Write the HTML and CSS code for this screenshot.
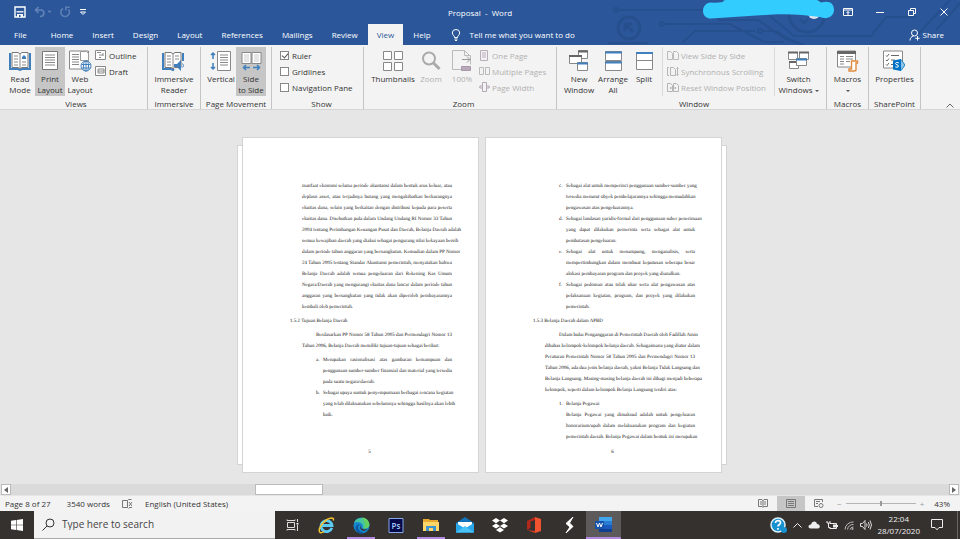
FILE: index.html
```html
<!DOCTYPE html>
<html lang="en">
<head>
<meta charset="utf-8">
<title>Proposal - Word</title>
<link rel="stylesheet" href="styles.css">
</head>
<body>
<header class="header">
  <svg class="circuit" width="360" height="45" viewBox="0 0 360 45" fill="none" stroke="#264f8d" stroke-width="2" aria-hidden="true">
    <circle cx="16" cy="10" r="2"/><path d="M18 10h92l10 10h38l26 18 20 7"/>
    <circle cx="29" cy="28" r="11" stroke-width="3"/><path d="M33 32l-8-8M25 31v-7h7" stroke-width="3"/><path d="M8 43h40"/>
    <circle cx="62" cy="24" r="2"/><path d="M64 24h66l34 18h20"/><path d="M82 43l13-12h60"/><circle cx="160" cy="31" r="2"/><path d="M162 31h14l20 12"/>
    <circle cx="207" cy="14" r="18" stroke-width="3"/><path d="M170 16l24 20h77l15-19h30M318 34l32-34M336 30l24-27"/>
    <path d="M200 19l4 4 4-4"/>
  </svg>
  <div class="titlebar">
    <div class="quick">
      <button class="qbtn" aria-label="Save"><svg width="12" height="12" viewBox="0 0 12 12"><path d="M1 1h10v10H1z" fill="none" stroke="#fff" stroke-width="1.4"/><path d="M2.500 5.800h7" stroke="#fff" stroke-width="1.300"/><path d="M3 8h6v3H3z" fill="#fff"/><path d="M5 9h1.500v2H5z" fill="#2b579a"/></svg></button>
      <button class="qbtn dim" aria-label="Undo"><svg width="18" height="12" viewBox="0 0 18 12" fill="none" stroke="#6484b8" stroke-width="1.600"><path d="M4.500 1L1.500 4l3 3M2 4h5c4 0 4 6-1 6.500M14 5.500h3"/></svg></button>
      <button class="qbtn" aria-label="Redo"><svg width="11" height="12" viewBox="0 0 11 12" fill="none" stroke="#5c7eb4" stroke-width="1.600"><path d="M3 2.500a4.300 4.300 0 1 0 5.500 1M5.800 4.500V1.200h4"/></svg></button>
      <button class="qbtn" aria-label="Customize Quick Access Toolbar"><svg width="8" height="8" viewBox="0 0 8 8" fill="none" stroke="#fff"><path d="M1 1.500h6M1.500 4L4 6.500 6.500 4z"/></svg></button>
    </div>
    <div class="title">Proposal&nbsp; -&nbsp; Word</div>
    <div class="wincontrols">
      <button aria-label="Ribbon Display Options"><svg width="10" height="8" viewBox="0 0 10 8" fill="none" stroke="#fff"><path d="M.5.5h9v7h-9zM.5 2h9M5 7V3.500M3.500 5L5 3.500 6.500 5"/></svg></button>
      <button aria-label="Minimize"><svg width="8" height="8" viewBox="0 0 8 8"><path d="M0 4.500h8" stroke="#fff"/></svg></button>
      <button aria-label="Restore"><svg width="8" height="8" viewBox="0 0 8 8" fill="none" stroke="#fff"><path d="M.5 2.500h5v5h-5zM2.500 2V.5h5v5H6"/></svg></button>
      <button aria-label="Close"><svg width="8" height="8" viewBox="0 0 8 8"><path d="M.5.5l7 7M7.500.5l-7 7" stroke="#fff"/></svg></button>
    </div>
  </div>
  <svg class="marker" width="133" height="20" viewBox="0 0 133 20" aria-hidden="true"><circle cx="113" cy="13" r="6" fill="#dfe6f0"/><path d="M9 2.500Q16 3 22 2 22 0 25 0H116Q119 1 120 2.500C129 0 133 4 133 10c0 7-8 10-14 7C104 15 88 13.500 72 14.500L10 18.500C-1 18 0 4 9 2.500z" fill="#33ccff"/></svg>
  <nav class="tabs">
    <a class="tab file" href="#">File</a><a class="tab" href="#">Home</a><a class="tab" href="#">Insert</a><a class="tab" href="#">Design</a><a class="tab" href="#">Layout</a><a class="tab" href="#">References</a><a class="tab" href="#">Mailings</a><a class="tab" href="#">Review</a><a class="tab active" href="#">View</a><a class="tab" href="#">Help</a>
    <button class="tellme"><svg width="10" height="12" viewBox="0 0 10 12" fill="none" stroke="#fff"><path d="M3.500 8.500C3.500 6.500 1.300 6 1.300 4a3.700 3.500 0 0 1 7.400 0c0 2-2.200 2.500-2.200 4.500zM3.500 10h3M4 11.500h2"/></svg>Tell me what you want to do</button>
    <button class="share"><svg width="11" height="12" viewBox="0 0 11 12" fill="none" stroke="#fff"><circle cx="5.500" cy="4" r="3"/><path d="M1 11.500C1 9 2.500 7.500 4.500 7M8.500 7v4.500M6.300 9.300h4.400"/></svg>Share</button>
  </nav>
</header>

<section class="ribbon" aria-label="View ribbon">
  <div class="group views">
    <div class="body">
      <button class="big w30"><svg width="22" height="20" viewBox="0 0 22 20" fill="none"><path d="M1 2v16h8l2 1 2-1h8V2" stroke="#3f7fbd" stroke-width="2"/><path d="M3 1.500h6l2 1.500 2-1.500h6v15h-6.500L11 18l-1.500-1.500H3z" fill="#fff" stroke="#777"/><path d="M11 3v14M5 5h4M5 8h4M5 11h4M5 14h4M13 11h4M13 14h4" stroke="#888"/><path d="M13 8V6l2-2 2 2v2z" fill="#3f7fbd"/></svg><span>Read<br>Mode</span></button>
      <button class="big w30 on"><svg width="16" height="20" viewBox="0 0 16 20" fill="none"><path d="M.5.500h15v18H.5z" fill="#fff" stroke="#777"/><path d="M3 4h10M3 6.500h10M3 9h10M3 11.500h10M3 14h10" stroke="#888"/></svg><span>Print<br>Layout</span></button>
      <button class="big w30"><svg width="23" height="21" viewBox="0 0 23 21" fill="none"><path d="M.5.500h19v18H.5z" fill="#fff" stroke="#888"/><path d="M3 4h7M3 6.500h7M3 9h7M3 11.500h7M3 14h7" stroke="#888"/><path d="M11.500 1v9h8V3l-2-2z" fill="#fff" stroke="#999"/><circle cx="17" cy="15.500" r="5" fill="#fff" stroke="#3f7fbd"/><path d="M17 10.500v10M12.500 14h9M12.500 17.500h9" stroke="#3f7fbd"/><ellipse cx="17" cy="15.500" rx="2.500" ry="5" stroke="#3f7fbd"/></svg><span>Web<br>Layout</span></button>
      <div class="stack">
        <button class="small"><svg width="11" height="10" viewBox="0 0 11 10" fill="none" stroke="#888"><path d="M.5.500h10v9H.5z" fill="#fff"/><path d="M2 2.500h4M4 5h4M4 7.500h2M8 3v3"/></svg>Outline</button>
        <button class="small"><svg width="11" height="10" viewBox="0 0 11 10" fill="none" stroke="#888"><path d="M.5.500h10v9H.5z" fill="#fff"/><path d="M3 3h6v4H3zM3 5h6"/></svg>Draft</button>
      </div>
    </div>
    <div class="label">Views</div>
  </div>
  <div class="group immersive">
    <div class="body center">
      <button class="big"><svg width="23" height="20" viewBox="0 0 23 20" fill="none"><path d="M1 2v16h8l2 1 1-1M21 2v8" stroke="#3f7fbd" stroke-width="2"/><path d="M3 1.500h6l2 1.500 2-1.500h6v15h-6.500L11 18l-1.500-1.500H3z" fill="#fff" stroke="#777"/><path d="M11 3v14M5 5h4M5 8h4M5 11h4M5 14h4M13 5h4M13 8h4" stroke="#888"/><path d="M12 13h3l4-4v11l-4-4h-3z" fill="#3f7fbd"/><path d="M20.500 12.500q2 2 0 4" stroke="#3f7fbd"/></svg><span>Immersive<br>Reader</span></button>
    </div>
    <div class="label">Immersive</div>
  </div>
  <div class="group movement">
    <div class="body center">
      <button class="big w30"><svg width="22" height="20" viewBox="0 0 22 20" fill="none"><path d="M7.500.500h13v19h-13z" fill="#fff" stroke="#888"/><path d="M10 4h8M10 6.500h8M10 9h8M10 11.500h8M10 14h8" stroke="#888"/><path d="M3 2v6M1 4l2-2 2 2M3 12v6M1 16l2 2 2-2" stroke="#3f7fbd" stroke-width="1.500"/></svg><span>Vertical</span></button>
      <button class="big w30 on"><svg width="21" height="20" viewBox="0 0 21 20" fill="none"><path d="M1 1.500h9v11H1zM11 1.500h9v11h-9z" fill="#fff" stroke="#888"/><path d="M3 4h5M3 6h5M3 8h5M3 10h5M13 4h5M13 6h5M13 8h5M13 10h5" stroke="#ccc"/><path d="M9 16.500H3M5 14l-2.500 2.500L5 19M12 16.500h6M16 14l2.500 2.500L16 19" stroke="#3f7fbd" stroke-width="1.500"/></svg><span>Side<br>to Side</span></button>
    </div>
    <div class="label">Page Movement</div>
  </div>
  <div class="group show">
    <div class="body">
      <div class="stack">
        <label class="small"><input type="checkbox" checked>Ruler</label>
        <label class="small"><input type="checkbox">Gridlines</label>
        <label class="small"><input type="checkbox">Navigation Pane</label>
      </div>
    </div>
    <div class="label">Show</div>
  </div>
  <div class="group zoom">
    <div class="body">
      <button class="big w44"><svg width="20" height="20" viewBox="0 0 20 20" fill="#fff" stroke="#888"><path d="M.5.500h8v8h-8zM11.500.500h8v8h-8zM.5 11.500h8v8h-8zM11.500 11.500h8v8h-8z"/></svg><span>Thumbnails</span></button>
      <button class="big w30 off" disabled><svg width="20" height="20" viewBox="0 0 20 20" fill="none" stroke="#aaa"><circle cx="8" cy="7.500" r="6" stroke-width="2"/><path d="M12.500 12l6 6" stroke-width="3"/></svg><span>Zoom</span></button>
      <button class="big w30 off" disabled><svg width="20" height="22" viewBox="0 0 20 22" fill="none" stroke="#bbb"><path d="M.5.500h12l6 6M.5.500v19h9M12.500.500v5h6v9" /><path d="M10 9.500h8M15 6.500l3 3-3 3" stroke="#999"/><path d="M9.500 16.500h9v4h-9z" fill="#b8a8b8" stroke="#a99aa9"/></svg><span>100%</span></button>
      <div class="stack off">
        <button class="small" disabled><svg width="11" height="11" viewBox="0 0 11 11" fill="none" stroke="#bbaebb"><path d="M1.500.500h7v10h-7zM3 3h4M3 5h4M3 7h4"/></svg>One Page</button>
        <button class="small" disabled><svg width="11" height="10" viewBox="0 0 11 10" fill="none" stroke="#bbb"><path d="M.5 1.500h4v7h-4zM6.500 1.500h4v7h-4z"/></svg>Multiple Pages</button>
        <button class="small" disabled><svg width="11" height="10" viewBox="0 0 11 10" fill="none" stroke="#b4a8b4"><path d="M3.500.500h4v9h-4z"/><path d="M2.500 3l-2 2 2 2M8.500 3l2 2-2 2M0 5h3M8 5h3"/></svg>Page Width</button>
      </div>
    </div>
    <div class="label">Zoom</div>
  </div>
  <div class="group window">
    <div class="body">
      <button class="big w34"><svg width="20" height="22" viewBox="0 0 20 22" fill="#fff" stroke="#888"><path d="M9.500.500h9v8h-9z"/><path d="M9 1.500h10" stroke="#666" stroke-width="2"/><path d="M.5 5.500h12v8H.5z"/><path d="M0 6h13" stroke="#666" stroke-width="2"/><path d="M8.500 12.500h10v8h-10z"/><path d="M8 13.500h11" stroke="#3f7fbd" stroke-width="2"/></svg><span>New<br>Window</span></button>
      <button class="big w34"><svg width="17" height="20" viewBox="0 0 17 20" fill="#fff" stroke="#888"><path d="M.5.500h16v9H.5zM.5 10.500h16v9H.5z"/><path d="M0 1.500h17M0 11.500h17" stroke="#3f7fbd" stroke-width="2"/></svg><span>Arrange<br>All</span></button>
      <button class="big w28"><svg width="17" height="20" viewBox="0 0 17 20" fill="#fff" stroke="#888"><path d="M.5 1.500h16v17H.5zM0 9.500h17"/><path d="M0 2h17" stroke="#3f7fbd" stroke-width="2"/></svg><span>Split</span></button>
      <div class="stack off divided">
        <button class="small" disabled><svg width="12" height="9" viewBox="0 0 12 9" fill="none" stroke="#bbb"><path d="M.5.500h3l2 2v6h-5zM6.500.500h3l2 2v6h-5z"/></svg>View Side by Side</button>
        <button class="small" disabled><svg width="12" height="9" viewBox="0 0 12 9" fill="none" stroke="#b5b5b5"><path d="M2 .5H.5v8H2M3.500.500h3l2 2v6h-5zM10.500 0v9M9.500 1.500l1-1 1 1M9.500 7.500l1 1 1-1"/></svg>Synchronous Scrolling</button>
        <button class="small" disabled><svg width="12" height="9" viewBox="0 0 12 9" fill="none" stroke="#b5b5b5"><path d="M.5.500h3l2 2v6h-5zM6.500.500h3l2 2v6h-5zM3 5h6M4 4L3 5l1 1M8 4l1 1-1 1"/></svg>Reset Window Position</button>
      </div>
      <button class="big switch"><svg width="21" height="20" viewBox="0 0 21 20" fill="#fff" stroke="#888"><path d="M.5 1.500h9v7h-9zM11.500 1.500h9v7h-9zM1.500 10.500h9v7h-9z"/><path d="M0 1.500h10M11 1.500h10M1 11h7" stroke="#666" stroke-width="2"/><path d="M8.500 7.500h10v7h-10z"/><path d="M8 8.500h11" stroke="#3f7fbd" stroke-width="2"/></svg><span>Switch<br>Windows <i class="caret"></i></span></button>
    </div>
    <div class="label">Window</div>
  </div>
  <div class="group macros">
    <div class="body center">
      <button class="big"><svg width="22" height="21" viewBox="0 0 22 21" fill="none"><path d="M.5.500h18v16H.5z" fill="#fff" stroke="#888"/><path d="M0 2h19" stroke="#666" stroke-width="3"/><path d="M3 6h4M3 8.500h4M3 11h4M3 13.500h4M9 6h7M9 8.500h7M9 11h4" stroke="#888"/><path d="M14.500 18.500v-8h6v2h-1.500v6.500c0 1-1 1.500-2 1.500h-5v-2z" fill="#fff" stroke="#e08a3c" stroke-width="1.400"/></svg><span>Macros<br><i class="caret"></i></span></button>
    </div>
    <div class="label">Macros</div>
  </div>
  <div class="group sharepoint">
    <div class="body center">
      <button class="big"><svg width="22" height="21" viewBox="0 0 22 21" fill="none"><path d="M.5.500h19v17H.5z" fill="#fff" stroke="#888"/><path d="M3 5l1 1 2-2.500M3 9.500l1 1 2-2.500M3 14l1 1 2-2.500M8 5h8M8 9.500h4M8 14h2" stroke="#666"/><path d="M16 10l2-1 4 5.500-4 5.500-2-1z" fill="#8cc4e8" stroke="#1683c7"/><path d="M10 10l8-1.500v12L10 19z" fill="#0072c6"/><path d="M15.800 12.300q-3.300-1-3.300.7c0 1.500 3 1 3 2.500 0 1.700-3 1.200-3.200.8" stroke="#fff"/></svg><span>Properties</span></button>
    </div>
    <div class="label">SharePoint</div>
  </div>
  <button class="collapse" aria-label="Collapse the Ribbon"><svg width="8" height="5" viewBox="0 0 8 5"><path d="M.5 4.500L4 1l3.500 3.500" fill="none" stroke="#666"/></svg></button>
</section>

<main class="workspace">
  <div class="spread">
    <article class="page left">
      <p class="just"><span>manfaat ekonomi selama periode akuntansi dalam bentuk arus keluar, atau</span><span>deplasn asset, atau terjadinya hutang yang mengakibatkan berkurangnya</span><span>ekuitas dana, selain yang berkaitan dengan distribusi kepada para peserta</span><span>ekuitas dana. Disebutkan pula dalam Undang Undang RI Nomor 33 Tahun</span><span>2004 tentang Perimbangan Keuangan Pusat dan Daerah, Belanja Daerah adalah</span><span>semua kewajiban daerah yang diakui sebagai pengurang nilai kekayaan bersih</span><span>dalam periode tahun anggaran yang bersangkutan. Kemudian dalam PP Nomor</span><span>24 Tahun 2005 tentang Standar Akuntansi pemerintah, menyatakan bahwa</span><span>Belanja Daerah adalah semua pengeluaran dari Rekening Kas Umum</span><span>Negara/Daerah yang mengurangi ekuitas dana lancar dalam periode tahun</span><span>anggaran yang bersangkutan yang tidak akan diperoleh pembayarannya</span><span class="last">kembali oleh pemerintah.</span></p>
      <h2>1.5.2 Tujuan Belanja Daerah</h2>
      <p class="just"><span class="indent">Berdasarkan PP Nomor 58 Tahun 2005 dan Permendagri Nomor 13</span><span class="last">Tahun 2006, Belanja Daerah memiliki tujuan-tujuan sebagai berikut:</span></p>
      <ol class="just">
        <li><b>a.</b><span>Merupakan rasionalisasi atas gambaran kemampuan dan</span><span>penggunaan sumber-sumber finansial dan material yang tersedia</span><span class="last">pada suatu negara/daerah.</span></li>
        <li><b>b.</b><span>Sebagai upaya suntuk penyempurnaan berbagai rencana kegiatan</span><span>yang telah dilaksanakan sebelumnya sehingga hasilnya akan lebih</span><span class="last">baik.</span></li>
      </ol>
      <footer>5</footer>
    </article>
    <article class="page right">
      <ol class="just">
        <li><b>c.</b><span>Sebagai alat untuk memperinci penggunaan sumber-sumber yang</span><span>tersedia menurut obyek pembelajarannya sehingga memudahkan</span><span class="last">pengawasan atas pengeluarannya.</span></li>
        <li><b>d.</b><span>Sebagai landasan yuridis-formal dari penggunaan suber penerimaan</span><span>yang dapat dilakukan pemerinta serta sebagai alat untuk</span><span class="last">pembatasan pengeluaran.</span></li>
        <li><b>e.</b><span>Sebagai alat untuk menampung, menganalisis, serta</span><span>mempertimbangkan dalam membuat keputusan seberapa besar</span><span class="last">alokasi pembayaran program dan proyek yang dianalkan.</span></li>
        <li><b>f.</b><span>Sebagai pedoman atau tolak ukur serta alat pengawasan atas</span><span>pelaksanaan kegiatan, program, dan proyek yang dilakukan</span><span class="last">pemerintah.</span></li>
      </ol>
      <h2>1.5.3 Belanja Daerah dalam APBD</h2>
      <p class="just"><span class="indent">Dalam buku Penganggaran di Pemerintah Daerah oleh Fadillah Amin</span><span>dibahas kelompok-kelompok belanja daerah. Sebagaimana yang diatur dalam</span><span>Peraturan Pemerintah Nomor 58 Tahun 2005 dan Permendagri Nomor 13</span><span>Tahun 2006, ada dua jenis belanja daerah, yakni Belanja Tidak Langsung dan</span><span>Belanja Langsung. Masing-masing belanja daerah ini dibagi menjadi beberapa</span><span class="last">kelompok, seperti dalam kelompok Belanja Langsung terdiri atas:</span></p>
      <ol class="just">
        <li><b>1.</b><span class="last">Belanja Pegawai</span><span>Belanja Pegawai yang dimaksud adalah untuk pengeluaran</span><span>honorarium/upah dalam melaksanakan program dan kegiatan</span><span>pemerintah daerah. Belanja Pegawai dalam bentuk ini merupakan</span></li>
      </ol>
      <footer>6</footer>
    </article>
  </div>
</main>

<div class="hscroll">
  <button aria-label="Scroll left"><svg width="4" height="6" viewBox="0 0 4 6"><path d="M4 0v6L0 3z" fill="#666"/></svg></button>
  <div class="track"><div class="thumb"></div></div>
  <button aria-label="Scroll right"><svg width="4" height="6" viewBox="0 0 4 6"><path d="M0 0v6l4-3z" fill="#666"/></svg></button>
</div>

<div class="status">
  <span>Page 8 of 27</span><span>3540 words</span>
  <button class="proof" aria-label="Proofing"><svg width="11" height="10" viewBox="0 0 11 10" fill="none" stroke="#777"><path d="M5.500 1.500v7H.5v-7h5l1-1h3M5.500 8.500l1 1M7 3l3 4M10 3L7 7M7 8.500h3"/></svg></button>
  <span>English (United States)</span>
  <div class="viewmodes">
    <button aria-label="Read Mode"><svg width="10" height="9" viewBox="0 0 10 9" fill="none" stroke="#777"><path d="M.5.500H4l1 1 1-1h3.500v7H6l-1 1-1-1H.5zM5 1v7M2 3h2M2 5h2M6 3h2M6 5h2"/></svg></button>
    <button class="on" aria-label="Print Layout"><svg width="10" height="9" viewBox="0 0 10 9" fill="none" stroke="#777"><path d="M.5.500h9v8h-9zM2 2.500h6M2 4.500h6M2 6.500h6"/></svg></button>
    <button aria-label="Web Layout"><svg width="10" height="9" viewBox="0 0 10 9" fill="none" stroke="#777"><path d="M4 7.500H.5v-7h8V3M2 2.500h4M2 4.500h2"/><circle cx="7" cy="6.500" r="2"/></svg></button>
  </div>
  <div class="zoomer"><button aria-label="Zoom Out">−</button><input type="range" min="0" max="100" value="50" aria-label="Zoom"><button aria-label="Zoom In">+</button></div>
  <span class="pct">43%</span>
</div>

<footer class="taskbar">
  <button class="start" aria-label="Start"><svg width="12" height="12" viewBox="0 0 12 12" fill="#fff"><path d="M0 1.700l5-.7v4.700H0zM5.600.9L12 0v5.700H5.600zM0 6.300h5V11l-5-.7zM5.600 6.300H12V12l-6.400-.9z"/></svg></button>
  <label class="search"><svg width="13" height="13" viewBox="0 0 13 13" fill="none" stroke="#333"><circle cx="8" cy="5" r="4"/><path d="M5 8l-4.500 4.500"/></svg><input type="text" placeholder="Type here to search" aria-label="Search"></label>
  <div class="apps">
    <button aria-label="Task View"><svg width="13" height="12" viewBox="0 0 13 12" fill="none" stroke="#ddd"><path d="M1.500 3.500h7v5h-7zM1 1.500v-1M1 1.500h8v-1M1 11.500v-1h8v1M11.500 0v3M11.500 6v6"/><path d="M10.500 4h2v1.500h-2z" fill="#fff" stroke="none"/></svg></button>
    <button aria-label="Internet Explorer"><svg width="17" height="17" viewBox="0 0 17 17" fill="none"><path d="M13.800 10.800A5.500 5.500 0 1 1 14 8.500H4.500" stroke="#5ccbf5" stroke-width="2.800"/><path d="M2 15.500C-1 12 6 3 12 1.300c3-1 4 .3 3.200 2.200M2 15.500c1 .6 2.500 0 4-.8" stroke="#f2c230" stroke-width="1.500"/></svg></button>
    <button class="open" aria-label="Microsoft Edge"><svg width="17" height="17" viewBox="0 0 17 17"><circle cx="8.500" cy="8.500" r="8" fill="#1687d0"/><path d="M1 6C3 0 13-1 16 6c1 4-2 6-5 5.500-2 0-1-1-1-2.500C9 5 4 4 1 6z" fill="#46c4a0"/><path d="M9 .5c4 0 7 3 7.500 7 0 3-3 4.500-5.500 4 3-4 0-7-2-11z" fill="#63d160"/><path d="M7 7c-4 3-1 8 4 9-6 2-10-3-8-7 1-1.500 3-2 4-2z" fill="#0c59a4"/><path d="M8.500 7.500c-2 3 1 6 6 4.500-1 1.500-3 2-4.500 1.700-3-.7-3.500-4-1.500-6.200z" fill="#383432"/></svg></button>
    <button aria-label="Photoshop"><svg width="16" height="15" viewBox="0 0 16 15"><path d="M1 .5h14v14H1z" fill="#04094a" stroke="#86a8e8"/><text x="8" y="10.500" text-anchor="middle" font-family="Open Sans" font-weight="600" font-size="8" fill="#a9ccff">Ps</text></svg></button>
    <button class="open" aria-label="File Explorer"><svg width="16" height="14" viewBox="0 0 16 14"><path d="M0 1h6l1 1h8v11H0z" fill="#e7a92f"/><path d="M0 4h16v9H0z" fill="#ffd768"/><path d="M3 13V8h10v5h-3v-3H6v3z" fill="#3f94d0"/></svg></button>
    <button aria-label="Mail"><svg width="18" height="16" viewBox="0 0 18 16"><path d="M0 6l9-6 9 6v9.500H0z" fill="#1273bb"/><path d="M2 5h14v7H2z" fill="#fff"/><path d="M0 6l9 5.500L18 6v9.500H0z" fill="#29a7ea"/><path d="M0 15.500L9 9l9 6.500z" fill="#49c2f5"/></svg></button>
    <button aria-label="Dropbox"><svg width="16" height="15" viewBox="0 0 16 15" fill="#fff"><path d="M4 0l4 2.600-4 2.600L0 2.600zM12 0l4 2.600-4 2.600-4-2.600zM4 5.400L8 8l-4 2.600L0 8zM12 5.400L16 8l-4 2.600L8 8zM8 9.300l4 2.600-4 2.600-4-2.600z"/></svg></button>
    <button aria-label="Office"><svg width="14" height="16" viewBox="0 0 14 16"><path d="M0 4l8-4v3L3.500 4.500V11L0 13z" fill="#b3281a"/><path d="M0 13l8 1v2z" fill="#d63b1f"/><path d="M8 0l6 2v12l-6 2z" fill="#ef5330"/></svg></button>
    <button aria-label="Scribble"><svg width="9" height="17" viewBox="0 0 9 17"><path d="M8 0L1 6.500 5 10l-4 6 7-6.500L4.500 6z" fill="#fff" stroke="#fff"/></svg></button>
    <button class="open current" aria-label="Word"><svg width="17" height="16" viewBox="0 0 17 16"><path d="M4 0h13v4H4z" fill="#41a5ee"/><path d="M4 4h13v4H4z" fill="#2b7cd3"/><path d="M4 8h13v4H4z" fill="#185abd"/><path d="M4 12h13v3H4z" fill="#103f91"/><path d="M0 4h9v8H0z" fill="#1553ac"/><path d="M1.500 6l1.500 4 1.500-4L6 10l1.500-4" fill="none" stroke="#fff"/></svg></button>
  </div>
  <div class="tray">
    <svg width="17" height="17" viewBox="0 0 17 17"><circle cx="8" cy="8" r="7" fill="#1791d0" stroke="#dff2fb" stroke-width="1.500"/><path d="M5.500 6c0-3.500 5.500-3 5 0 0 1.500-2.500 1.500-2.500 3.500M8 11v1.800" fill="none" stroke="#fff" stroke-width="1.700"/><circle cx="14" cy="13" r="3" fill="#1791d0"/></svg>
    <svg width="9" height="6" viewBox="0 0 9 6"><path d="M.5 5.500l4-4 4 4" fill="none" stroke="#eee"/></svg>
    <svg width="12" height="8" viewBox="0 0 12 8"><path d="M2.500 7.500C-.5 7 0 3.500 3 3.500 4 0 8-.5 9 3c3 0 4 4 1 4.500z" fill="#eee"/></svg>
    <svg width="12" height="10" viewBox="0 0 12 10" fill="none" stroke="#eee"><path d="M4 3.500h6.500v5h-7M1 1v2h3V1M2.500 3v4.500h2M11.500 5v2"/><path d="M7 4.500h3v3H7z" fill="#eee" stroke="none"/></svg>
    <svg width="10" height="9" viewBox="0 0 10 9" fill="none" stroke="#bbb"><path d="M1 8.500A8 8 0 0 1 9.500 1M3.500 8.500a5.500 5.500 0 0 1 6-5M6 8.500A3.500 3.500 0 0 1 9.500 6"/><circle cx="8.500" cy="8" r=".7"/></svg>
    <svg width="12" height="10" viewBox="0 0 12 10" fill="none" stroke="#ddd"><path d="M.5 3.500h2l2.500-3v9l-2.500-3h-2zM6.500 3.500q1.300 1.500 0 3M8.300 2q2 3 0 6M10 .5q3 4.500 0 9"/></svg>
    <time class="clock"><span>22:04</span><span>28/07/2020</span></time>
    <button aria-label="Notifications"><svg width="12" height="12" viewBox="0 0 12 12" fill="none" stroke="#eee"><path d="M.5.500h11v8H8L6 10.800 4 8.500H.5z"/></svg></button>
  </div>
</footer>
</body>
</html>
```
FILE: styles.css
```css
* { box-sizing: border-box; }
body {
  margin: 0;
  min-height: 100vh;
  display: flex;
  flex-direction: column;
  font-family: "Open Sans", "Noto Sans", sans-serif;
  font-size: 8px;
  line-height: 11px;
  color: #333;
  background: #e6e6e6;
}
button, input { font: inherit; color: inherit; }
button {
  margin: 0;
  padding: 0;
  border: 0;
  background: none;
  display: flex;
  align-items: center;
  justify-content: center;
}
svg { display: block; flex: none; }

/* Title bar and tabs */
.header { position: relative; background: #2b579a; color: #fff; }
.circuit { position: absolute; top: 0; right: 0; }
.marker { position: absolute; top: 0; right: 126px; }
.titlebar, .tabs { position: relative; display: flex; }
.titlebar { height: 24px; display: grid; grid-template-columns: 1fr auto 1fr; align-items: center; }
.quick { display: flex; gap: 8px; padding-left: 14px; }
.wincontrols { display: flex; justify-content: flex-end; }
.wincontrols button { width: 32px; height: 20px; }
.tabs { height: 21px; align-items: stretch; gap: 1px; }
.tab { padding: 0 9px; line-height: 21px; color: #fff; text-decoration: none; }
.tab.file { padding: 0 14px; }
.tab.active { background: #f3f3f3; color: #2b579a; }
.tellme { gap: 9px; margin-left: 10px; }
.share { gap: 3px; margin-left: auto; padding-right: 16px; }

/* Ribbon */
.ribbon { display: flex; position: relative; height: 65px; padding: 2px 0 0; background: #f3f3f3; border-bottom: 1px solid #d5d5d5; }
.group { display: flex; flex-direction: column; justify-content: space-between; border-right: 1px solid #c4c4c4; }
.body { display: flex; height: 49px; }
.center { justify-content: center; }
.label { text-align: center; }
.big { flex-direction: column; justify-content: flex-start; padding-top: 3px; white-space: nowrap; }
.big svg { margin-bottom: 1px; height: 22px; }
.big span { line-height: 11px; }
.w28 { width: 28px; }
.w30 { width: 30px; }
.w34 { width: 34px; }
.w44 { width: 44px; }
.on { background: #c6c6c6; }
.off, .off .small { color: #b0b0b0; }
.stack { display: flex; flex-direction: column; }
.small { display: flex; justify-content: flex-start; align-items: center; gap: 3px; height: 16px; white-space: nowrap; }
.small input { appearance: none; margin: 0; width: 9px; height: 9px; border: 1px solid #888; background: #fff; }
.small input:checked { position: relative; }
.small input:checked::after { content: ""; position: absolute; left: 2px; top: 0; width: 3px; height: 5px; border: solid #555; border-width: 0 1px 1px 0; transform: rotate(40deg); }
.views { width: 148px; padding-left: 5px; }
.immersive { width: 53px; }
.movement { width: 71px; }
.show { width: 92px; padding-left: 8px; }
.zoom { width: 193px; padding-left: 7px; }
.zoom .body { gap: 1px; }
.zoom .stack { margin-left: 1px; }
.zoom .small { gap: 2px; }
.window { width: 270px; padding-left: 5px; }
.divided { margin-left: 4px; padding: 0 8px 0 4px; border: solid #dadada; border-width: 0 1px; }
.divided .small { gap: 2px; }
.switch { flex: 1; padding-right: 4px; }
.macros { width: 42px; }
.sharepoint { width: 52px; }
.caret { display: inline-block; border: solid transparent; border-width: 2px 2px 0; border-top-color: #555; vertical-align: middle; }
.collapse { position: absolute; right: 6px; bottom: 1px; }

/* Document */
.workspace { flex: 1; padding: 27px 0 10px 4px; }
.spread { display: flex; justify-content: center; gap: 6px; isolation: isolate; }
.page {
  position: relative;
  width: 237px;
  height: 336px;
  padding: 43px 26px 0 59px;
  background: #fff;
  border: 1px solid #d4d4d4;
  font-family: "Liberation Serif", serif;
  font-size: 5px;
  text-rendering: geometricPrecision;
  color: #111;
}
.page::before { content: ""; position: absolute; z-index: -1; top: 7px; bottom: 7px; width: 20px; background: #fff; border: 1px solid #d4d4d4; }
.left::before { left: -6px; }
.right::before { right: -6px; }
.page p, .page ol { margin: 0 0 3px; padding: 0; list-style: none; }
.page h2 { margin: 0 0 3px -12px; font-size: 5px; font-weight: 400; }
.page span { display: block; white-space: nowrap; text-align: justify; text-align-last: justify; }
.page .last { text-align-last: left; }
.page .indent { padding-left: 14px; }
.page li { position: relative; padding-left: 21px; }
.page b { position: absolute; left: 14px; font-weight: 400; }
.page footer { position: absolute; bottom: 14px; left: 0; right: 0; text-align: center; padding-left: 18px; font-size: 5px; }

/* Horizontal scroll bar */
.hscroll { display: flex; height: 12px; padding: 0 1px 1px; background: #e6e6e6; }
.hscroll button { width: 10px; background: #fff; border: 1px solid #bbb; }
.track { flex: 1; background: #dadada; }
.thumb { width: 7.3%; height: 100%; margin-left: 26%; background: #fff; border: 1px solid #bbb; }

/* Status bar */
.status { display: flex; align-items: center; gap: 16px; height: 15px; padding: 0 10px 0 5px; background: #f3f3f3; }
.proof { margin: 0 -4px; }
.viewmodes { display: flex; margin-left: auto; align-self: stretch; }
.viewmodes button { width: 28px; }
.zoomer { display: flex; align-items: center; gap: 4px; margin-left: -12px; color: #999; }
.zoomer input { appearance: none; width: 70px; height: 9px; margin: 0; background: linear-gradient(#b5b5b5, #b5b5b5) center / 100% 1px no-repeat; }
.zoomer input::-webkit-slider-thumb { appearance: none; width: 2px; height: 5px; background: #999; }
.pct { margin-left: -6px; }

/* Taskbar */
.taskbar { display: flex; height: 28px; background: #35312f; color: #eee; }
.start { width: 34px; }
.search { display: flex; align-items: center; gap: 7px; width: 241px; padding-left: 8px; background: #f2f2f2; border-bottom: 1px solid #aaa; }
.search input { flex: 1; min-width: 0; border: 0; padding: 0; background: none; font-size: 10px; color: #444; }
.search input::placeholder { color: #444; opacity: 1; }
.apps { display: grid; grid-template-columns: repeat(10, 1fr); width: 346px; }
.open { background: linear-gradient(#b48ae0, #b48ae0) center bottom / 28px 2px no-repeat; }
.current { background-color: #5c5a5b; background-size: 100% 2px; }
.tray { display: flex; align-items: center; gap: 6px; margin: 0 2px 0 auto; padding-right: 14px; border-right: 1px solid #6a6664; }
.clock { display: flex; flex-direction: column; line-height: 12px; text-align: center; }
.tray .clock { margin-right: 5px; }
```
